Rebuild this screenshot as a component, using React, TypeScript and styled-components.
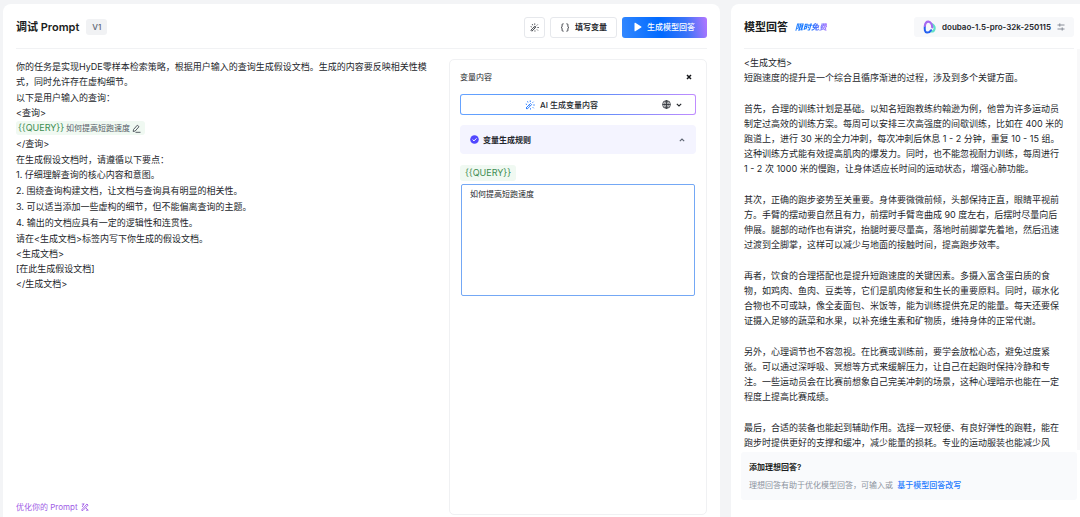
import React from "react";
import styled, { createGlobalStyle, css } from "styled-components";

const GlobalStyle = createGlobalStyle`
  *, *::before, *::after { box-sizing: border-box; }
  body {
    margin: 0;
    background: #f3f4f6;
    color: #23262b;
    font-family: Inter, "Noto Sans CJK SC", sans-serif;
    font-size: 9px;
    line-height: 15px;
  }
  button, textarea { font: inherit; color: inherit; margin: 0; }
  h1, h2, p, ol { margin: 0; padding: 0; }
`;

const brand = "linear-gradient(80deg, #3388ff 0%, #006aff 45%, #3d74f8 75%, #b476ff 100%)";

const Page = styled.div`
  display: grid;
  grid-template-columns: 717fr 349fr;
  gap: 11px;
  min-height: 100vh;
  padding: 4px 0 0 3px;
`;

const Panel = styled.section<{ $bleed?: boolean }>`
  display: flex;
  flex-direction: column;
  min-width: 0;
  background: #fff;
  border-radius: ${(p) => (p.$bleed ? "8px 0 0 0" : "8px 8px 0 0")};
  padding-left: 13px;
  padding-right: ${(p) => (p.$bleed ? "0" : "13px")};
`;

const Header = styled.header<{ $inset?: boolean }>`
  display: flex;
  align-items: center;
  gap: 5px;
  height: 45px;
  padding-top: 2px;
  margin-right: ${(p) => (p.$inset ? "6px" : "0")};
  border-bottom: 1px solid #f1f2f4;
`;

const Title = styled.h1`
  margin-right: 2px;
  font-size: 11px;
  line-height: 16px;
  font-weight: 600;
  color: #1b1d21;
`;

const VersionTag = styled.span`
  padding: 0 6px;
  border-radius: 3px;
  background: #f1f2f4;
  color: #5f6673;
  font-size: 8px;
  line-height: 16px;
  font-weight: 500;
`;

const Spacer = styled.div`
  flex: 1;
`;

const Button = styled.button<{ $primary?: boolean; $square?: boolean }>`
  display: inline-flex;
  align-items: center;
  justify-content: center;
  gap: 5px;
  height: 21px;
  padding: ${(p) => (p.$square ? "0" : "0 9px")};
  width: ${(p) => (p.$square ? "21px" : "auto")};
  border: 1px solid #e6e8ec;
  border-radius: 3px;
  background: #fff;
  font-size: 8px;
  line-height: 12px;
  font-weight: 600;
  white-space: nowrap;
  ${(p) =>
    p.$primary &&
    css`
      border: 0;
      padding: 0 12px;
      background: ${brand};
      color: #fff;
      font-weight: 500;
    `}
`;

const Workspace = styled.div`
  flex: 1;
  display: grid;
  grid-template-columns: 420fr 258fr;
  gap: 13px;
  padding: 10px 0 2px;
`;

const Editor = styled.div`
  display: flex;
  flex-direction: column;
  justify-content: space-between;
  padding-bottom: 2px;
`;

const Prompt = styled.div`
  display: flex;
  flex-direction: column;
  gap: 1px;
`;

const List = styled.ol`
  list-style: none;
  line-height: 16px;
`;

const VariableRow = styled.div`
  display: flex;
  height: 16px;
  align-items: center;
`;

const VariableChip = styled.span`
  display: inline-flex;
  align-items: center;
  gap: 2px;
  padding: 0 4px 0 2px;
  border-radius: 3px;
  background: #f0f9f2;
  color: #555c66;
  font-size: 8px;
  line-height: 14px;
`;

const VariableName = styled.span`
  color: #3c8c50;
  font-size: 9px;
`;

const IconButton = styled.button`
  display: inline-flex;
  align-items: center;
  gap: 5px;
  padding: 0;
  border: 0;
  background: none;
`;

const OptimizeLink = styled.a`
  display: inline-flex;
  align-items: center;
  gap: 3px;
  color: #a05ce6;
  font-size: 8px;
  line-height: 12px;
  text-decoration: none;
`;

const VariablePanel = styled.aside`
  display: flex;
  flex-direction: column;
  padding: 10px 10px 0;
  border: 1px solid #f0f1f3;
  border-radius: 5px;
  font-size: 8px;
  line-height: 14px;
`;

const VariableHeader = styled.div`
  display: flex;
  align-items: center;
  justify-content: space-between;
  padding-right: 4px;
  margin-bottom: 10px;
`;

const SectionTitle = styled.h2`
  font-size: 8px;
  line-height: 14px;
  font-weight: 400;
`;

const GenerateBar = styled.div`
  display: flex;
  align-items: center;
  height: 21px;
  padding-right: 13px;
  border: 1px solid transparent;
  border-radius: 3px;
  background:
    linear-gradient(#fff, #fff) padding-box,
    linear-gradient(90deg, #66a3ff, #4b8ef8 50%, #c08cff) border-box;
`;

const GenerateButton = styled.button`
  flex: 1;
  display: flex;
  align-items: center;
  justify-content: center;
  gap: 5px;
  padding: 0;
  border: 0;
  background: none;
  font-size: 8px;
  font-weight: 500;
`;

const RuleToggle = styled.button`
  display: flex;
  align-items: center;
  gap: 4px;
  height: 29px;
  margin: 10px 0 11px;
  padding: 0 11px 0 10px;
  border: 0;
  border-radius: 4px;
  background: #f4f4ff;
  font-size: 8px;
  font-weight: 600;
`;

const VariableLabel = styled.label`
  align-self: flex-start;
  padding: 0 5px;
  border-radius: 3px;
  background: #f0f9f2;
  color: #3c8c50;
  font-size: 9px;
  line-height: 16px;
`;

const VariableInput = styled.textarea`
  display: block;
  height: 112px;
  margin: 3px 1px 0;
  padding: 2px 8px;
  border: 1px solid #74a8f5;
  border-radius: 2px;
  outline: 0;
  resize: none;
  background: #fff;
  font-size: 8px;
  line-height: 14px;
`;

const FreeTag = styled.span`
  background: linear-gradient(90deg, #1778ff 45%, #a978ff);
  background-clip: text;
  color: transparent;
  font-size: 8px;
  line-height: 14px;
  font-weight: 800;
  font-style: italic;
`;

const ModelPicker = styled.button`
  display: flex;
  align-items: center;
  gap: 6px;
  height: 20px;
  padding: 0 9px;
  border: 0;
  border-radius: 3px;
  background: #f7f8fa;
  font-size: 8px;
  line-height: 12px;
  font-weight: 600;
  white-space: nowrap;
`;

const Answer = styled.div`
  flex: 1;
  display: flex;
  flex-direction: column;
  gap: 16px;
  padding: 6px 11px 0 0;
  border-right: 3px solid #f8f8f9;
`;

const IdealAnswer = styled.div`
  margin: 2px 3px 17px -3px;
  padding: 8px;
  border-radius: 3px;
  background: #f9fafc;
  color: #8d939e;
  font-size: 8px;
  line-height: 14px;
`;

const IdealTitle = styled.h2`
  margin-bottom: 4px;
  color: #1b1d21;
  font-size: 8px;
  line-height: 14px;
  font-weight: 600;
`;

const RewriteLink = styled.a`
  margin-left: 2px;
  color: #1c79ff;
  font-weight: 500;
  text-decoration: none;
`;

const Lines = ({ rows }: { rows: string[] }) => (
  <>
    {rows.map((row, i) => (
      <React.Fragment key={i}>
        {i > 0 && <br />}
        {row}
      </React.Fragment>
    ))}
  </>
);

const WandIcon = ({ size, stroke }: { size: number; stroke: string }) => (
  <svg width={size} height={size} viewBox="0 0 20 20" fill="none" stroke={stroke} strokeWidth="2" aria-hidden>
    <path d="M2 16 11 7l2.2 2.2-9 9zM8.5 9.5l2.2 2.2M5 2.5l1 2.5M1.5 8 4 9M10.5 1v3M17 3.5 15 5.5M19.5 10h-3M15.5 14.5l2 2M11 16.5V19" />
  </svg>
);

const PlayIcon = () => (
  <svg width="8" height="10" viewBox="0 0 8 10" fill="#fff" aria-hidden>
    <path d="M.5 1.2Q.5.4 1.3.8L7.2 4.4q.7.6 0 1.2L1.3 9.2q-.8.4-.8-.4z" />
  </svg>
);

const BracesIcon = () => (
  <svg width="10" height="9" viewBox="0 0 10 9" fill="none" stroke="#33373d" strokeWidth=".9" aria-hidden>
    <path d="M3.6.8H3Q2.1.8 2.1 1.7v1.6q0 1-1 1.2 1 .2 1 1.2v1.6q0 .9.9.9h.6M6.4.8H7q.9 0 .9.9v1.6q0 1 1 1.2-1 .2-1 1.2v1.6q0 .9-.9.9h-.6" />
  </svg>
);

const PenIcon = () => (
  <svg width="9" height="9" viewBox="0 0 9 9" fill="none" stroke="#454b54" strokeWidth=".9" aria-hidden>
    <path d="M1.5 5.5 5.3 1.2l1.7 1.5L3.2 7l-2 .5zM3.5 8.3h5" />
  </svg>
);

const OptimizeIcon = () => (
  <svg width="8" height="8" viewBox="0 0 8 8" fill="none" stroke="#a05ce6" strokeWidth=".9" aria-hidden>
    <path d="M.9 6.6 5.9 1l1.2 1.1L2 7.4H.8zM.8 1h2.4M3 .6 1.2 4M4.8 4.8l2.4 2.4M5 7.2h2.3" />
  </svg>
);

const CloseIcon = () => (
  <svg width="6" height="6" viewBox="0 0 6 6" stroke="#14161a" strokeWidth="1.5" aria-hidden>
    <path d="m1 1 4 4M5 1 1 5" />
  </svg>
);

const GlobeIcon = () => (
  <svg width="9" height="9" viewBox="0 0 9 9" fill="none" stroke="#33373d" strokeWidth=".9" aria-hidden>
    <circle cx="4.5" cy="4.5" r="3.9" />
    <ellipse cx="4.5" cy="4.5" rx="1.7" ry="3.9" />
    <path d="M.6 4.5h7.8M4.5.6v7.8" />
  </svg>
);

const Chevron = ({ up }: { up?: boolean }) => (
  <svg width="6" height="4" viewBox="0 0 6 4" fill="none" stroke={up ? "#5f6673" : "#23262b"} strokeWidth="1.1" aria-hidden>
    <path d={up ? "M.8 3.2 3 1l2.2 2.2" : "M.8.8 3 3 5.2.8"} />
  </svg>
);

const CheckIcon = () => (
  <svg width="9" height="9" viewBox="0 0 9 9" aria-hidden>
    <circle cx="4.5" cy="4.5" r="4.3" fill="#5147ff" />
    <path d="m2.6 4.5 1.4 1.4 2.5-2.6" fill="none" stroke="#fff" />
  </svg>
);

const ModelIcon = () => (
  <svg width="13" height="14" viewBox="0 0 13 14" fill="none" strokeLinecap="round" aria-hidden>
    <path d="M8.6 4C10.8 5.2 12 7.4 11.4 9.4c-.5 1.6-2 2.3-3.6 2" stroke="#62e0c8" strokeWidth="2.2" />
    <path d="M1.9 6C1.3 9.2 1.8 12.4 4 12.6c2 .1 3.2-1 4-2.4" stroke="#2460f0" strokeWidth="2" />
    <path d="M1.9 6C2 3.2 3.6 1.6 5.4 1.7 7.6 1.9 9.3 4.4 9.2 7.4" stroke="#a569f0" strokeWidth="2.2" />
  </svg>
);

const SwapIcon = () => (
  <svg width="8" height="8" viewBox="0 0 8 8" fill="none" stroke="#7d838e" strokeWidth=".9" aria-hidden>
    <path d="M.5 2h7M2.8.4v3.2M.5 6h7M5.2 4.4v3.2" />
  </svg>
);

const answer: string[][] = [
  ["<生成文档>", "短跑速度的提升是一个综合且循序渐进的过程，涉及到多个关键方面。"],
  [
    "首先，合理的训练计划是基础。以知名短跑教练约翰逊为例，他曾为许多运动员",
    "制定过高效的训练方案。每周可以安排三次高强度的间歇训练，比如在 400 米的",
    "跑道上，进行 30 米的全力冲刺，每次冲刺后休息 1 - 2 分钟，重复 10 - 15 组。",
    "这种训练方式能有效提高肌肉的爆发力。同时，也不能忽视耐力训练，每周进行",
    "1 - 2 次 1000 米的慢跑，让身体适应长时间的运动状态，增强心肺功能。",
  ],
  [
    "其次，正确的跑步姿势至关重要。身体要微微前倾，头部保持正直，眼睛平视前",
    "方。手臂的摆动要自然且有力，前摆时手臂弯曲成 90 度左右，后摆时尽量向后",
    "伸展。腿部的动作也有讲究，抬腿时要尽量高，落地时前脚掌先着地，然后迅速",
    "过渡到全脚掌，这样可以减少与地面的接触时间，提高跑步效率。",
  ],
  [
    "再者，饮食的合理搭配也是提升短跑速度的关键因素。多摄入富含蛋白质的食",
    "物，如鸡肉、鱼肉、豆类等，它们是肌肉修复和生长的重要原料。同时，碳水化",
    "合物也不可或缺，像全麦面包、米饭等，能为训练提供充足的能量。每天还要保",
    "证摄入足够的蔬菜和水果，以补充维生素和矿物质，维持身体的正常代谢。",
  ],
  [
    "另外，心理调节也不容忽视。在比赛或训练前，要学会放松心态，避免过度紧",
    "张。可以通过深呼吸、冥想等方式来缓解压力，让自己在起跑时保持冷静和专",
    "注。一些运动员会在比赛前想象自己完美冲刺的场景，这种心理暗示也能在一定",
    "程度上提高比赛成绩。",
  ],
  [
    "最后，合适的装备也能起到辅助作用。选择一双轻便、有良好弹性的跑鞋，能在",
    "跑步时提供更好的支撑和缓冲，减少能量的损耗。专业的运动服装也能减少风",
  ],
];

export default function App() {
  return (
    <>
      <GlobalStyle />
      <Page lang="zh-CN">
        <Panel>
          <Header>
            <Title>调试 Prompt</Title>
            <VersionTag>V1</VersionTag>
            <Spacer />
            <Button $square aria-label="优化">
              <WandIcon size={9} stroke="#33373d" />
            </Button>
            <Button>
              <BracesIcon />
              填写变量
            </Button>
            <Button $primary>
              <PlayIcon />
              生成模型回答
            </Button>
          </Header>
          <Workspace>
            <Editor>
              <Prompt>
                <p>你的任务是实现HyDE零样本检索策略，根据用户输入的查询生成假设文档。生成的内容要反映相关性模式，同时允许存在虚构细节。</p>
                <div>
                  <p><Lines rows={["以下是用户输入的查询：", "<查询>"]} /></p>
                  <VariableRow>
                    <VariableChip>
                      <VariableName>{"{{QUERY}}"}</VariableName>
                      如何提高短跑速度
                      <IconButton aria-label="编辑"><PenIcon /></IconButton>
                    </VariableChip>
                  </VariableRow>
                  <p>{"</查询>"}</p>
                </div>
                <div>
                  <p>在生成假设文档时，请遵循以下要点：</p>
                  <List>
                    <li>1. 仔细理解查询的核心内容和意图。</li>
                    <li>2. 围绕查询构建文档，让文档与查询具有明显的相关性。</li>
                    <li>3. 可以适当添加一些虚构的细节，但不能偏离查询的主题。</li>
                    <li>4. 输出的文档应具有一定的逻辑性和连贯性。</li>
                  </List>
                  <p><Lines rows={["请在<生成文档>标签内写下你生成的假设文档。", "<生成文档>", "[在此生成假设文档]", "</生成文档>"]} /></p>
                </div>
              </Prompt>
              <OptimizeLink href="#optimize">
                优化你的 Prompt
                <OptimizeIcon />
              </OptimizeLink>
            </Editor>
            <VariablePanel>
              <VariableHeader>
                <SectionTitle>变量内容</SectionTitle>
                <IconButton aria-label="关闭"><CloseIcon /></IconButton>
              </VariableHeader>
              <GenerateBar>
                <GenerateButton>
                  <WandIcon size={10} stroke="#2f80ff" />
                  AI 生成变量内容
                </GenerateButton>
                <IconButton aria-label="语言">
                  <GlobeIcon />
                  <Chevron />
                </IconButton>
              </GenerateBar>
              <RuleToggle aria-expanded="true">
                <CheckIcon />
                变量生成规则
                <Spacer />
                <Chevron up />
              </RuleToggle>
              <VariableLabel htmlFor="query">{"{{QUERY}}"}</VariableLabel>
              <VariableInput id="query" defaultValue="如何提高短跑速度" />
            </VariablePanel>
          </Workspace>
        </Panel>
        <Panel $bleed>
          <Header $inset>
            <Title>模型回答</Title>
            <FreeTag>限时免费</FreeTag>
            <Spacer />
            <ModelPicker>
              <ModelIcon />
              doubao-1.5-pro-32k-250115
              <SwapIcon />
            </ModelPicker>
          </Header>
          <Answer>
            {answer.map((rows, i) => (
              <p key={i}><Lines rows={rows} /></p>
            ))}
          </Answer>
          <IdealAnswer>
            <IdealTitle>添加理想回答?</IdealTitle>
            <p>理想回答有助于优化模型回答，可输入或 <RewriteLink href="#rewrite">基于模型回答改写</RewriteLink></p>
          </IdealAnswer>
        </Panel>
      </Page>
    </>
  );
}
